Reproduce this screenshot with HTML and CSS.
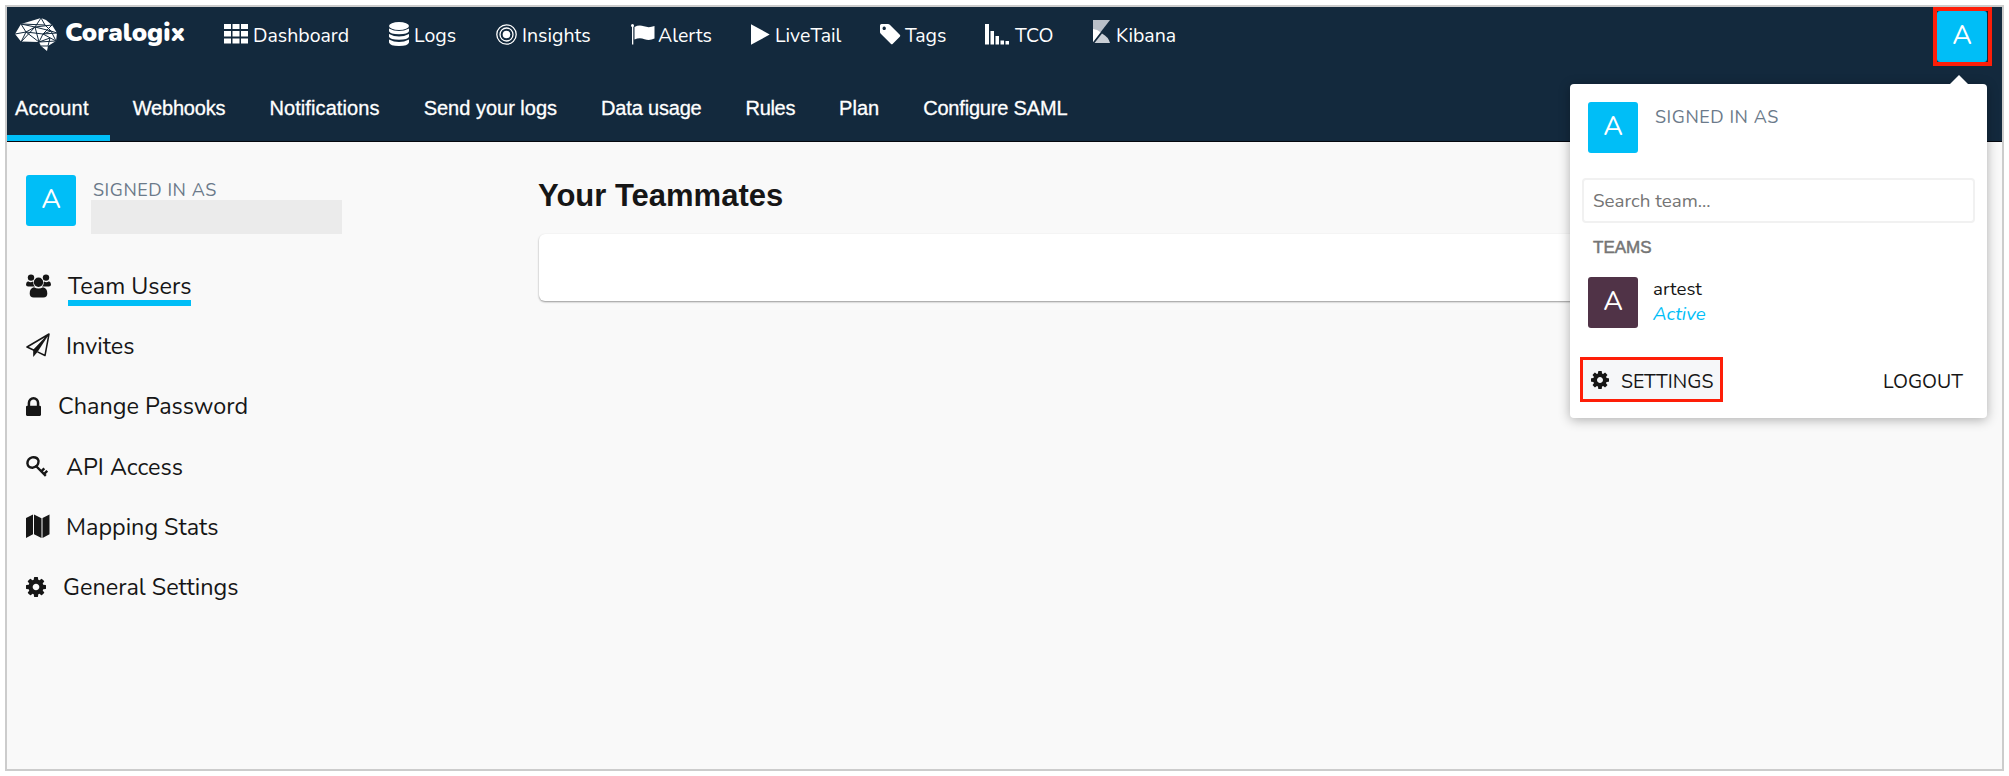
FILE: index.html
```html
<!DOCTYPE html>
<html lang="en">
<head>
<meta charset="utf-8">
<title>Coralogix</title>
<link rel="stylesheet" href="styles.css">
</head>
<body>
<svg class="defs" width="0" height="0" aria-hidden="true">
  <symbol id="gear" viewBox="128 128 1536 1536"><path d="M1152 896q0-106-75-181t-181-75-181 75-75 181 75 181 181 75 181-75 75-181zm512-109v222q0 12-8 23t-20 13l-185 28q-19 54-39 91 35 50 107 138 10 12 10 25t-9 23q-27 37-99 108t-94 71q-12 0-26-9l-138-108q-44 23-91 38-16 136-29 186-7 28-36 28h-222q-14 0-24.500-8.500t-11.500-21.500l-28-184q-49-16-90-37l-141 107q-10 9-25 9-14 0-25-11-126-114-165-168-7-10-7-23 0-12 8-23 15-21 51-66.500t54-70.500q-27-50-41-99l-183-27q-13-2-21-12.500t-8-23.500v-222q0-12 8-23t19-13l186-28q14-46 39-92-40-57-107-138-10-12-10-24 0-10 9-23 26-36 98.500-107.500t94.500-71.500q13 0 26 10l138 107q44-23 91-38 16-136 29-186 7-28 36-28h222q14 0 24.500 8.500t11.500 21.500l28 184q49 16 90 37l142-107q9-9 24-9 13 0 25 10 129 119 165 170 7 8 7 22 0 12-8 23-15 21-51 66.500t-54 70.500q26 50 41 98l183 28q13 2 21 12.500t8 23.500z"/></symbol>
</svg>
<div class="app">
  <header class="header">
    <div class="topbar">
      <div class="brand">
        <svg class="brand-mark" width="43" height="36" viewBox="0 0 43 36">
          <path fill="#fff" d="M0 17 6 7 26 1 31 3 37 8 42 16 41 24 33 29 32 34 26 29 24 25 6 24.500Z"/>
          <path fill="none" stroke="#13293d" stroke-width="1" d="M0 17 11 15 6 7 20 10 26 1 30 8 7 7M11 15 20 10 37 8M11 15 6 25M11 15 24 25 20 10 36 14 30 8M6 25 20 10M11 15 28 17 37 8M42 16 28 17 24 25 41 24 36 14M28 17 41 24M28 17 36 14 42 16M24 25 35 21 33 29M26 29 33 29"/>
        </svg>
        <span class="brand-name">Coralogix</span>
      </div>
      <nav class="apps">
        <a class="app-link w-dashboard"><svg width="24" height="20" viewBox="0 0 24 20"><path d="M0 0h7v5H0zM8.500 0h7v5h-7zM17 0h7v5h-7zM0 7h7v5.500H0zM8.500 7h7v5.500h-7zM17 7h7v5.500h-7zM0 14.500h7v5H0zM8.500 14.500h7v5h-7zM17 14.500h7v5h-7z"/></svg><span>Dashboard</span></a>
        <a class="app-link w-logs"><svg width="20" height="24" viewBox="0 0 20 24"><ellipse cx="10" cy="4" rx="10" ry="4"/><path d="M0 6.500q10 5 20 0v2.700q-1 3-10 3T0 9.200zM0 12q10 5 20 0v2.700q-1 3-10 3T0 14.700zM0 17.500q10 5 20 0v3q-1 3.500-10 3.500T0 20.500z"/></svg><span>Logs</span></a>
        <a class="app-link w-insights"><svg width="21" height="21" viewBox="0 0 21 21"><g fill="none" stroke="#fff" stroke-width="1.300"><circle cx="10.500" cy="10.500" r="9.700"/><circle cx="10.500" cy="10.500" r="6.500"/></g><circle cx="10.500" cy="10.500" r="3.800"/></svg><span>Insights</span></a>
        <a class="app-link w-alerts"><svg width="24" height="21" viewBox="0 0 24 21"><circle cx="1.500" cy="1.500" r="1.500"/><path d="M1 1h1.300v19.500H1zM3.500 3Q8 .5 13 2.300T23.500 2v12.500Q18.500 17 13.500 15.200T3.500 15.500z"/></svg><span>Alerts</span></a>
        <a class="app-link w-livetail"><svg width="19" height="21" viewBox="0 0 19 21"><path d="M0 .2 18.700 10.500 0 20.800z"/></svg><span>LiveTail</span></a>
        <a class="app-link w-tags"><svg width="21" height="21" viewBox="0 0 21 21"><path fill-rule="evenodd" d="M0 1.500Q0 0 1.500 0H8q1 0 1.800.8l10 10q1 1 0 2l-7 7q-1 1-2 0l-10-10Q0 9 0 8zM4.200 2.600a1.700 1.700 0 1 0 .01 0z"/></svg><span>Tags</span></a>
        <a class="app-link w-tco"><svg width="24" height="21" viewBox="0 0 24 21"><path d="M0 0h4v20.500H0zM5.500 7H9v13.500H5.500zM10.500 12H14v8.500h-3.500zM15.500 16.500H19v4h-3.500zM20.500 17H24v3.500h-3.500z"/></svg><span>TCO</span></a>
        <a class="app-link w-kibana"><svg class="raised" width="18" height="24" viewBox="0 0 18 24"><path fill="#b9bfc8" d="M0 0h17L0 22z"/><path fill="#fff" d="M0 9q4.500.3 7.500 3.200L0 22z"/><path fill="#c9ced5" d="M9 13.500Q15.500 17 17 23H1.500z"/></svg><span>Kibana</span></a>
      </nav>
      <button class="user-button"><span class="avatar">A</span></button>
    </div>
    <nav class="tabs">
      <a class="tab active wide">Account</a>
      <a class="tab snug">Webhooks</a>
      <a class="tab roomy">Notifications</a>
      <a class="tab">Send your logs</a>
      <a class="tab snug">Data usage</a>
      <a class="tab tight">Rules</a>
      <a class="tab">Plan</a>
      <a class="tab snug">Configure SAML</a>
    </nav>
  </header>
  <div class="body">
    <aside class="sidebar">
      <div class="profile">
        <span class="avatar">A</span>
        <div class="profile-text"><span class="signed">SIGNED IN AS</span><span class="redacted"></span></div>
      </div>
      <ul class="menu">
        <li><svg width="25" height="24" viewBox="0 0 25 24"><circle cx="5" cy="3.600" r="3.200"/><circle cx="20" cy="3.600" r="3.200"/><path d="M2 7.300q2.500 1.500 5 .3.200 3.500 2 5H2.500Q0 12.800 0 10.500 0 8 2 7.300zM23 7.300q-2.500 1.500-5 .3-.2 3.500-2 5h6.500q2.500.2 2.500-2.100 0-2.500-2-3.200z"/><circle cx="12.500" cy="8.300" r="4.700"/><path d="M8 13.200q4.500 2.500 9 0 4.300.8 4.300 6.300 0 4-4 4H7.700q-4 0-4-4 0-5.500 4.300-6.300z"/></svg><a class="current">Team Users</a></li>
        <li><svg width="24" height="25" viewBox="0 0 24 25"><path fill="none" stroke="#161616" stroke-width="1.500" stroke-linejoin="round" d="M23 1 1 14l7 3.200L23 1l-4 21.500-7.500-3.600"/><path d="M21.500 3.500 7.200 16.800V24l4.300-5z"/></svg><a class="near">Invites</a></li>
        <li><svg width="15" height="19" viewBox="320 128 1152 1408" preserveAspectRatio="none"><path d="M640 768h512v-192q0-106-75-181t-181-75-181 75-75 181v192zm832 96v576q0 40-28 68t-68 28h-960q-40 0-68-28t-28-68v-576q0-40 28-68t68-28h32v-192q0-184 132-316t316-132 316 132 132 316v192h32q40 0 68 28t28 68z"/></svg><a>Change Password</a></li>
        <li><svg width="22" height="21" viewBox="0 0 22 21"><g fill="none" stroke="#161616" stroke-width="2.400"><path d="M6 1.400q5.500-.6 6.500 3.400.3 5.600-5.600 6.900Q2 12 1.400 7.400 1.600 2.600 6 1.400z"/><path d="M9.500 9.500 19.800 19.800M15.300 15.300l3-3M18.200 17.800l3-3"/></g></svg><a class="far">API Access</a></li>
        <li><svg width="24" height="25" viewBox="0 0 24 25"><path d="M0 4 7 .5v19.800L0 24zM8 .5l7.500 3.700V24L8 20.300zM16.500 4 23.500.5v19.800L16.500 24z"/></svg><a class="near">Mapping Stats</a></li>
        <li><svg width="20" height="20"><use href="#gear"/></svg><a>General Settings</a></li>
      </ul>
    </aside>
    <main class="content">
      <h1>Your Teammates</h1>
      <div class="card"></div>
    </main>
  </div>
  <div class="popup">
    <div class="popup-user"><span class="avatar">A</span><span class="signed">SIGNED IN AS</span></div>
    <div class="search">Search team...</div>
    <div class="label">TEAMS</div>
    <div class="team"><span class="avatar plum">A</span><div class="team-text"><span>artest</span><em>Active</em></div></div>
    <div class="actions">
      <a class="settings"><svg width="18" height="18"><use href="#gear"/></svg><span>SETTINGS</span></a>
      <a class="logout">LOGOUT</a>
    </div>
  </div>
</div>
</body>
</html>
```
FILE: styles.css
```css
* { box-sizing: border-box; }
body { margin: 0; padding: 5px; background: #fff; font-family: Nunito, Lato, sans-serif; color: #161616; }
svg { display: block; flex: none; fill: currentColor; }
.defs { position: absolute; }

.app { position: relative; width: 1999px; height: 766px; border: 2px solid #ccc; background: #f9f9f9; }

.header { height: 135px; background: #13293d; border-bottom: 1px solid #05080f; color: #fff; display: flex; flex-direction: column; }
.topbar { height: 68px; display: flex; align-items: flex-start; }
.brand { display: flex; align-items: flex-start; width: 217px; padding-left: 8px; gap: 7px; }
.brand-mark { margin-top: 10px; }
.brand-name { font-size: 25.700px; font-weight: 900; line-height: 52px; }
.apps { display: flex; flex: 1; height: 54px; }
.app-link { display: flex; align-items: center; gap: 5px; font-size: 19.500px; line-height: 54px; }
.app-link span { padding-top: 4px; }
.app-link .raised { margin-top: -5px; }
.w-dashboard { width: 165px; }
.w-logs { width: 107px; }
.w-insights { width: 135px; }
.w-alerts { width: 120px; gap: 3px; }
.w-livetail { width: 129px; }
.w-tags { width: 105px; gap: 4px; }
.w-tco { width: 108px; gap: 6px; }
.user-button { margin: 0 10px 0 0; padding: 0; width: 59px; height: 59px; border: 4px solid #fe1e08; background: none; display: block; font: inherit; }
.avatar { display: block; flex: none; width: 50px; height: 51px; border-radius: 3px; background: #00bef7; color: #fff; font-size: 27px; line-height: 50px; text-align: center; }
.plum { background: #503347; }

.tabs { display: flex; height: 66px; font: 20px/66px "Liberation Sans", Arial, sans-serif; padding-left: 8px; gap: 44px; -webkit-text-stroke: 0.3px #fff; }
.tab.wide { letter-spacing: 0.200px; }
.tab.roomy { letter-spacing: 0.100px; }
.tab.snug { letter-spacing: -0.180px; }
.tab.tight { letter-spacing: -0.320px; }
.tab.active { position: relative; }
.tab.active::after { content: ""; position: absolute; left: -8px; bottom: 0; width: 103px; height: 6px; background: #00bef7; }

.body { display: flex; }
.sidebar { width: 531px; padding: 33px 0 0 19px; }
.profile { display: flex; height: 60px; gap: 15px; }
.profile-text { display: flex; flex-direction: column; }
.signed { font-size: 18px; line-height: 25px; color: #6b7a8a; letter-spacing: 0.550px; padding-left: 2px; }
.profile-text .signed { height: 25px; padding-top: 3px; }
.redacted { width: 251px; height: 34px; background: #ebebeb; }
.menu { list-style: none; margin: 20px 0 0; padding: 0; }
.menu li { display: flex; align-items: center; height: 60.300px; font-size: 23.400px; gap: 17px; }
.menu svg { margin-top: 1px; }
.menu a { line-height: 40px; position: relative; padding-top: 1px; }
.menu .near { margin-left: -1px; }
.menu .far { margin-left: 1px; }
.menu .current::after { content: ""; position: absolute; left: 0; right: 0; bottom: 0; height: 6px; background: #00bef7; }

.content { flex: 1; padding-top: 34px; }
h1 { margin: 0; font: bold 31px/40px "Liberation Sans", Arial, sans-serif; }
.card { margin: 18px 0 0 1px; width: 1400px; height: 67px; border-radius: 6px; background: #fff; box-shadow: 0 1px 2px rgba(0,0,0,.4); }

.popup { position: absolute; left: 1563px; top: 77px; width: 417px; height: 334px; background: #fff; border-radius: 4px; box-shadow: 0 2px 12px rgba(0,0,0,.3); }
.popup::before { content: ""; position: absolute; left: 380px; top: -9px; border: 9px solid transparent; border-top: 0; border-bottom-color: #fff; }
.popup-user { display: flex; padding: 18px 0 0 18px; gap: 15px; height: 94px; }
.popup-user .signed { padding-top: 3px; }
.search { margin: 0 12px; height: 45px; border: 2px solid #f1f1f1; border-radius: 4px; padding-left: 9px; font-size: 18.800px; line-height: 42px; color: #757575; }
.label { font: 17px/22px "Liberation Sans", Arial, sans-serif; color: #757575; -webkit-text-stroke: 0.500px #757575; margin: 14px 0 0 23px; }
.team { display: flex; gap: 15px; margin: 18px 0 0 18px; }
.team-text { display: flex; flex-direction: column; font-size: 18.700px; line-height: 25px; }
.team-text em { color: #00bef7; }
.actions { display: flex; justify-content: space-between; align-items: flex-start; margin: 29px 24px 0 10px; font-size: 19.500px; line-height: 39px; }
.settings { display: flex; align-items: center; width: 143px; height: 45px; border: 3px solid #fe1e08; background: #f6f7f9; padding-left: 8px; gap: 12px; }
.settings span { padding-top: 3px; }
.logout { line-height: 49px; }
```
